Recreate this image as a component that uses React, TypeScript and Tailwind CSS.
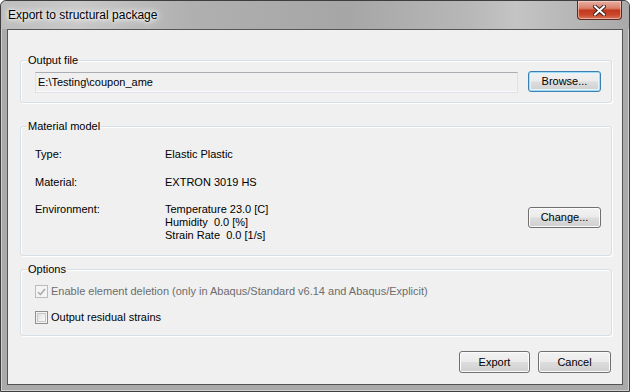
import type { ReactNode } from 'react';

// ─── Pieces ───────────────────────────────────────────────────────────────────

function WinButton({ children, isDefault, className = '' }: { children: ReactNode; isDefault?: boolean; className?: string }) {
  return (
    <button
      className={`h-[21px] rounded-[3px] border text-[11px] leading-[13px] text-black flex items-center justify-center bg-[linear-gradient(to_bottom,#f2f2f2_0%,#ebebeb_48%,#dddddd_52%,#cfcfcf_100%)] ${
        isDefault
          ? 'border-[#3c7fb1] shadow-[inset_0_0_0_1px_#9fdcf5,inset_0_0_0_2px_#e5f4fb]'
          : 'border-[#707070] shadow-[inset_0_0_0_1px_#fcfcfc]'
      } ${className}`}
    >
      {children}
    </button>
  );
}

function GroupBox({ label, className = '', children }: { label: string; className?: string; children: ReactNode }) {
  return (
    <div className={`relative rounded-[3px] border border-[#d5dfe5] shadow-[inset_1px_1px_0_#ffffff,1px_1px_0_#ffffff] ${className}`}>
      <span className="absolute left-[6px] top-[-7px] bg-[#f0f0f0] px-[1px] leading-[13px]">{label}</span>
      {children}
    </div>
  );
}

function CheckBox({ checked, disabled }: { checked?: boolean; disabled?: boolean }) {
  return (
    <span
      className={`w-[13px] h-[13px] shrink-0 border flex items-center justify-center ${
        disabled
          ? 'border-[#bcbcbc] bg-[#f4f4f4]'
          : 'border-[#8e8f8f] bg-[linear-gradient(135deg,#d8d8d8_0%,#f1f1f1_60%,#ffffff_100%)] shadow-[inset_0_0_0_1px_#f4f4f4,inset_0_0_0_2px_#c6c9cc]'
      }`}
    >
      {checked && (
        <svg width="9" height="8" viewBox="0 0 9 8">
          <path d="M1 4.2 L3.4 6.5 L8 1" fill="none" stroke={disabled ? '#a8a8a8' : '#4a5f97'} strokeWidth="1.5" />
        </svg>
      )}
    </span>
  );
}

// ─── Main Component ───────────────────────────────────────────────────────────

export default function App() {
  return (
    <div className="w-[630px] h-[392px] flex flex-col rounded-t-[6px] border border-[#3e3e3e] bg-[#aaaaaa] shadow-[inset_0_0_0_1px_#d0d0d0] font-['Liberation_Sans',Arial,sans-serif] text-[11px] text-black overflow-hidden">
      {/* Title bar */}
      <div className="h-[28px] shrink-0 flex items-start justify-between bg-[linear-gradient(to_right,#bdbdbd_0%,#c9c9c9_12%,#b0b0b0_30%,#a6a6a6_55%,#b8b8b8_75%,#c4c4c4_82%,#a9a9a9_100%)] rounded-t-[5px]">
        <span className="pl-[7px] pt-[7px] text-[12px] leading-[15px] [text-shadow:0_0_6px_#ffffff,0_0_10px_#ffffff,0_0_3px_#ffffff]">
          Export to structural package
        </span>
        <div className="mr-[7px] w-[45px] h-[19px] rounded-b-[4px] border border-t-0 border-[#5c2b22] bg-[linear-gradient(to_bottom,#e7b0a2_0%,#d9806b_40%,#c2391e_52%,#c9462a_75%,#da745b_100%)] shadow-[inset_0_0_0_1px_rgba(255,220,210,0.55)] flex items-center justify-center">
          <svg width="13" height="11" viewBox="0 0 13 11">
            <path d="M2 1.5 L11 9.5 M11 1.5 L2 9.5" stroke="#3b2320" strokeWidth="4" strokeLinecap="square" />
            <path d="M2 1.5 L11 9.5 M11 1.5 L2 9.5" stroke="#ffffff" strokeWidth="2" strokeLinecap="square" />
          </svg>
        </div>
      </div>

      {/* Client area */}
      <div className="mx-[6px] mb-[6px] flex-1 border border-[#555555] bg-[#f0f0f0] pl-[12px] pr-[10px] flex flex-col">
        {/* Output file */}
        <GroupBox label="Output file" className="mt-[30px] flex items-start pt-[10px] pb-[9px] pl-[14px] pr-[10px] gap-[10px]">
          <div className="mt-[1px] flex-1 h-[21px] border border-[#dde2e8] border-t-[#abadb3] bg-[#f0f0f0] shadow-[inset_0_-1px_0_#fbfbfb] flex items-center pl-[2px] leading-[13px]">
            E:\Testing\coupon_ame
          </div>
          <WinButton isDefault className="w-[73px]">Browse...</WinButton>
        </GroupBox>

        {/* Material model */}
        <GroupBox label="Material model" className="mt-[23px] pt-[21px] pb-[13px] pl-[14px] pr-[10px] flex flex-col leading-[13px]">
          <div className="flex">
            <span className="w-[130px]">Type:</span>
            <span>Elastic Plastic</span>
          </div>
          <div className="flex mt-[15px]">
            <span className="w-[130px]">Material:</span>
            <span>EXTRON 3019 HS</span>
          </div>
          <div className="flex items-start mt-[14px]">
            <span className="w-[130px]">Environment:</span>
            <div className="flex flex-col">
              <span>Temperature 23.0 [C]</span>
              <span>Humidity&nbsp; 0.0 [%]</span>
              <span>Strain Rate&nbsp; 0.0 [1/s]</span>
            </div>
            <WinButton className="ml-auto mt-[4px] w-[73px]">Change...</WinButton>
          </div>
        </GroupBox>

        {/* Options */}
        <GroupBox label="Options" className="mt-[13px] pt-[15px] pb-[11px] pl-[14px] pr-[10px] flex flex-col gap-[13px] leading-[13px]">
          <label className="flex items-center gap-[3px] text-[#6d6d6d]">
            <CheckBox checked disabled />
            <span>Enable element deletion (only in Abaqus/Standard v6.14 and Abaqus/Explicit)</span>
          </label>
          <label className="flex items-center gap-[3px]">
            <CheckBox />
            <span>Output residual strains</span>
          </label>
        </GroupBox>

        {/* Footer buttons */}
        <div className="mt-[15px] flex justify-end gap-[8px] pr-[1px]">
          <WinButton className="w-[71px] h-[22px]">Export</WinButton>
          <WinButton className="w-[73px] h-[22px]">Cancel</WinButton>
        </div>
      </div>
    </div>
  );
}
